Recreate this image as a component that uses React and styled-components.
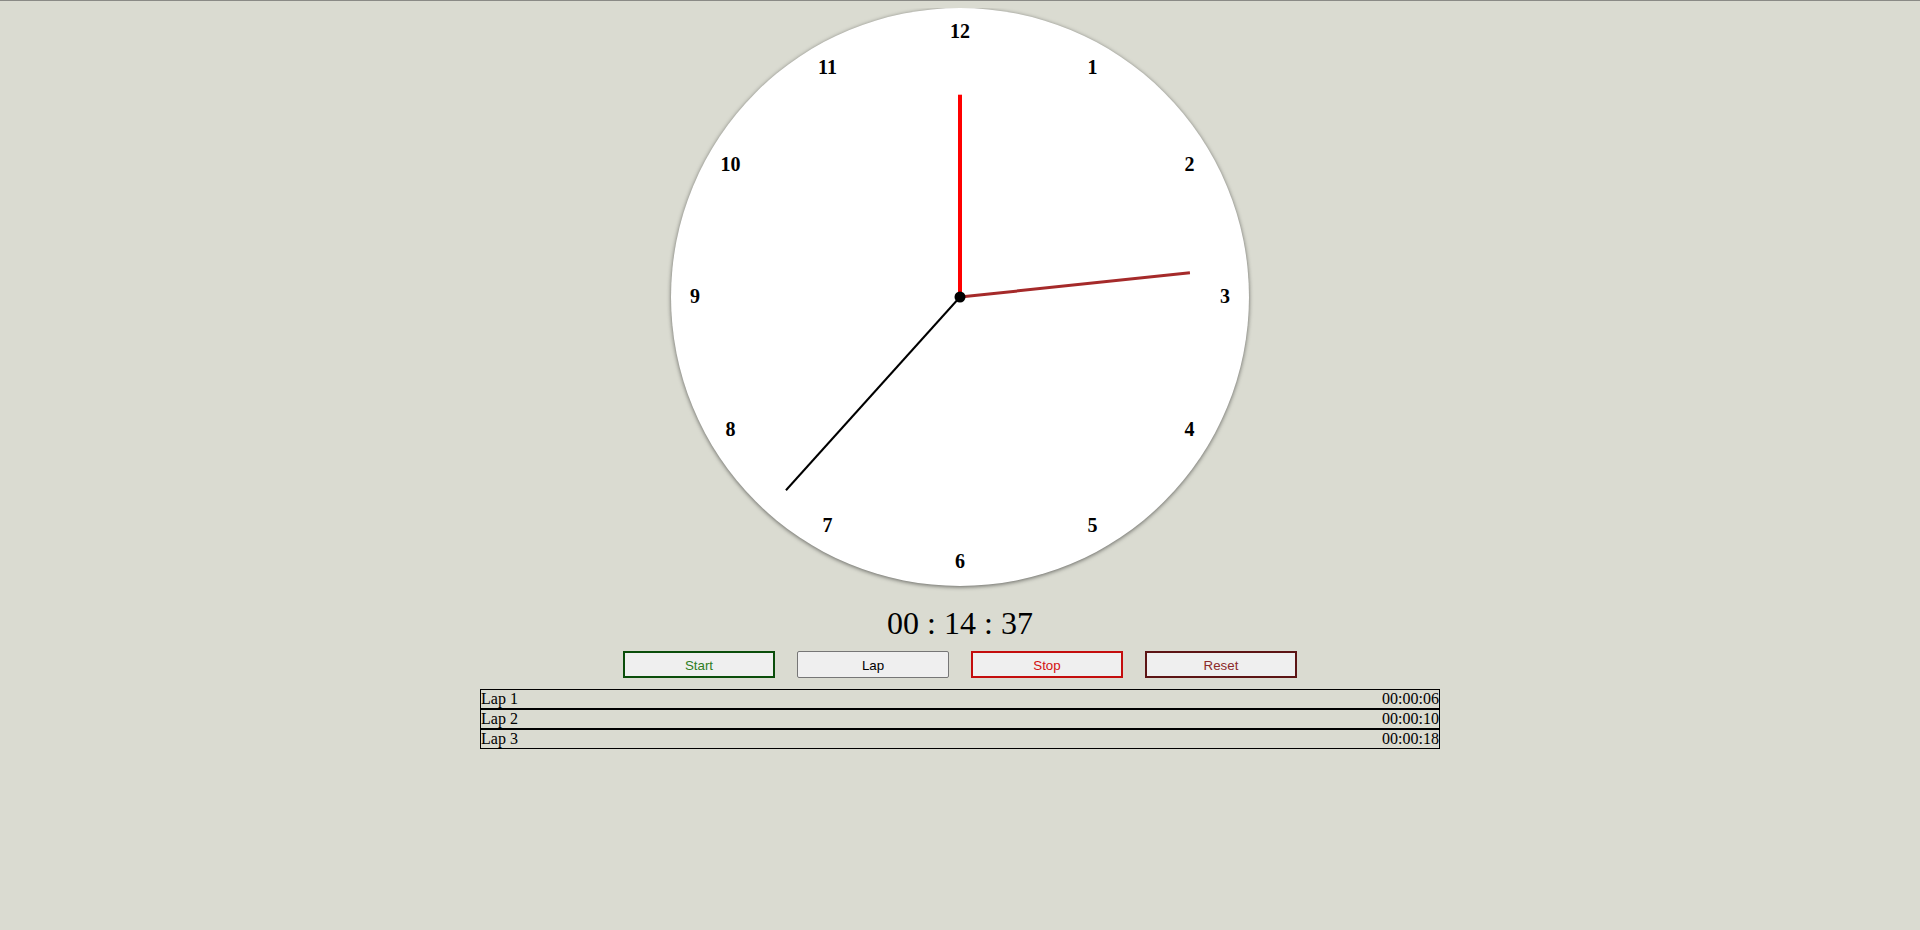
import React from 'react'
import styled, {createGlobalStyle} from 'styled-components'

const Global = createGlobalStyle`
  html {
    background: #dadbd1;
    border-top: 1px solid #8a8a86;
  }
  body {
    margin: 7px 8px 8px 8px;
    background: #dadbd1;
    font-family: "Liberation Serif", serif;
  }
`

const Page = styled.div`
  display: flex;
  flex-direction: column;
  align-items: center;
`

const Face = styled.div`
  width: 578px;
  height: 578px;
  border-radius: 50%;
  background: #fff;
  box-shadow: 0 1px 4px rgba(0, 0, 0, 0.55);
`

const Readout = styled.div`
  margin-top: 19px;
  font-family: "Liberation Serif", serif;
  font-size: 32px;
  line-height: 37px;
  color: #000;
`

const Controls = styled.div`
  display: flex;
  gap: 22px;
  margin-top: 9px;
`

const Button = styled.button`
  width: 152px;
  height: 27px;
  box-sizing: border-box;
  background: #efefef;
  font-family: "Liberation Sans", sans-serif;
  font-size: 13.33px;
  color: ${p => p.color};
  border: ${p => p.plain ? '1px solid #767676' : `2px solid ${p.edge}`};
  border-radius: ${p => p.plain ? '2px' : '0'};
  padding: 2px 0 0 0;
`

const Laps = styled.div`
  width: 960px;
  margin-top: 11px;
`

const LapRow = styled.div`
  display: flex;
  justify-content: space-between;
  border: 1px solid #000;
  font-family: "Liberation Serif", serif;
  font-size: 16px;
  line-height: 18px;
  color: #000;
`

const R = 289
const numbers = [12, 1, 2, 3, 4, 5, 6, 7, 8, 9, 10, 11]

const hand = (deg, len) => {
  const a = (deg * Math.PI) / 180
  return {x2: R + Math.sin(a) * len, y2: R - Math.cos(a) * len}
}

function Clock () {
  const hour = hand(0, R * 0.7)
  const minute = hand(84, R * 0.8)
  const second = hand(222, R * 0.9)
  return (
    <Face>
      <svg width={R * 2} height={R * 2}>
        {numbers.map((n, i) => {
          const a = (i * 30 * Math.PI) / 180
          return (
            <text
              key={n}
              x={R + Math.sin(a) * 265}
              y={R - Math.cos(a) * 265 + 6}
              textAnchor='middle'
              fontFamily='Liberation Serif, serif'
              fontWeight='bold'
              fontSize='20'
            >
              {n}
            </text>
          )
        })}
        <line x1={R} y1={R} {...hour} stroke='#ff0000' strokeWidth='4' />
        <line x1={R} y1={R} {...minute} stroke='#a52a2a' strokeWidth='3' />
        <line x1={R} y1={R} {...second} stroke='#000' strokeWidth='2' />
        <circle cx={R} cy={R} r='5.5' fill='#000' />
      </svg>
    </Face>
  )
}

export default function App () {
  const laps = [
    ['Lap 1', '00:00:06'],
    ['Lap 2', '00:00:10'],
    ['Lap 3', '00:00:18'],
  ]
  return (
    <Page>
      <Global />
      <Clock />
      <Readout>00 : 14 : 37</Readout>
      <Controls>
        <Button color='#2e7d1e' edge='#0a4d0a'>Start</Button>
        <Button color='#000' plain>Lap</Button>
        <Button color='#d41010' edge='#c40d0d'>Stop</Button>
        <Button color='#8b2a2a' edge='#5c1414'>Reset</Button>
      </Controls>
      <Laps>
        {laps.map(([name, time]) => (
          <LapRow key={name}>
            <span>{name}</span>
            <span>{time}</span>
          </LapRow>
        ))}
      </Laps>
    </Page>
  )
}
